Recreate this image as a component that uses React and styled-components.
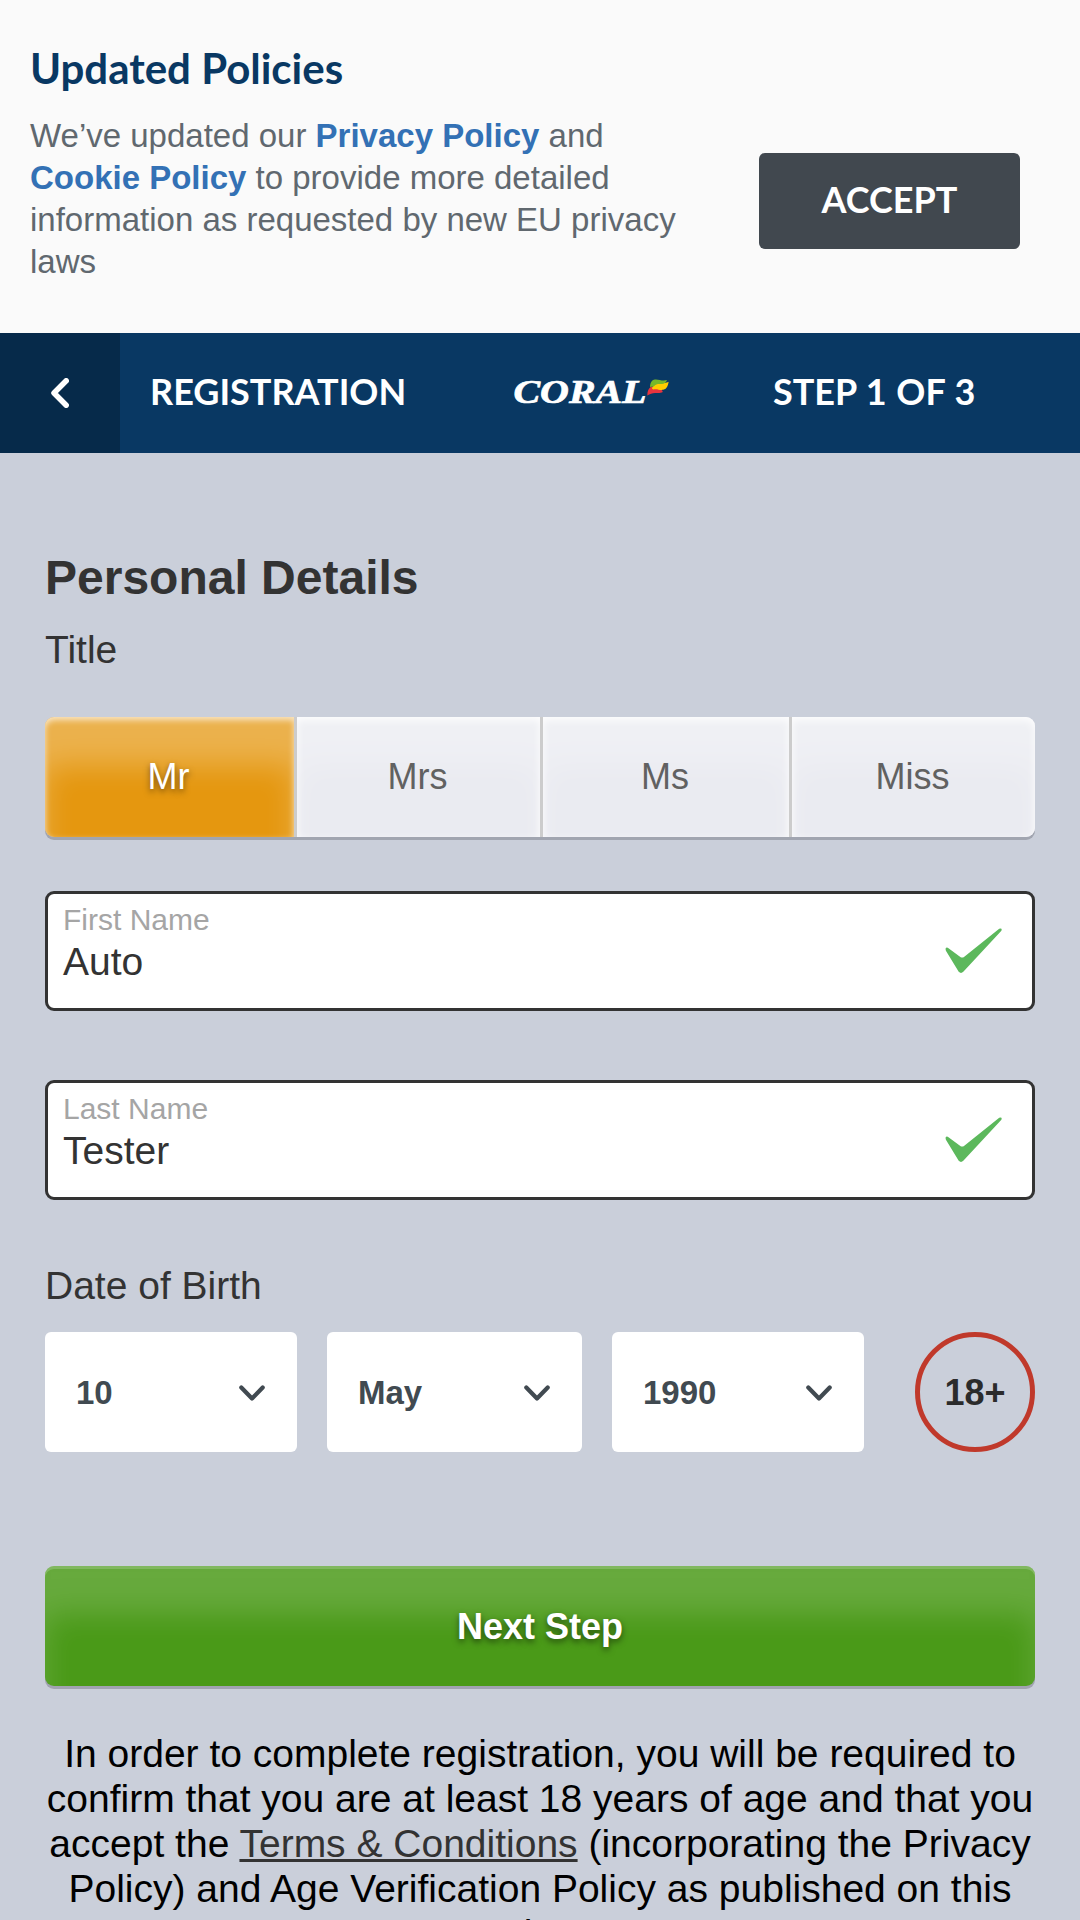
import React from 'react';
import styled, { createGlobalStyle, css } from 'styled-components';

const GlobalStyle = createGlobalStyle`
  *, *::before, *::after { box-sizing: border-box; }
  html, body { margin: 0; padding: 0; }
  body {
    background: #cacfda;
    color: #333;
    font-family: "Liberation Sans", Arial, Helvetica, sans-serif;
  }
  button, input { font: inherit; margin: 0; border: 0; padding: 0; }
  h1, h2, p { margin: 0; }
`;

const Page = styled.div`
  width: 1080px;
  height: 1920px;
  overflow: hidden;
  display: flex;
  flex-direction: column;
  background: #cacfda;
`;

const Banner = styled.section`
  flex: none;
  height: 333px;
  padding: 43px 60px 0 30px;
  display: flex;
  justify-content: space-between;
  background: #fafafa;
`;

const BannerCopy = styled.div`
  width: 675px;
`;

const BannerTitle = styled.h2`
  color: #093863;
  font: 700 42px/50px Lato, sans-serif;
`;

const BannerText = styled.p`
  margin-top: 22px;
  color: #60686f;
  font-size: 33px;
  line-height: 42px;
`;

const PolicyLink = styled.a`
  color: #3371b5;
  font-weight: 700;
`;

const AcceptButton = styled.button`
  width: 261px;
  height: 96px;
  margin-top: 110px;
  border-radius: 6px;
  background: #41484f;
  color: #fff;
  && {
    font: 700 36px/44px Lato, sans-serif;
    padding-bottom: 5px;
  }
`;

const NavBar = styled.header`
  flex: none;
  height: 120px;
  display: grid;
  grid-template-columns: 120px 393px 260px 1fr;
  align-items: center;
  background: #093863;
  color: #fff;
  font: 700 36px/44px Lato, sans-serif;
`;

const BackButton = styled.button`
  height: 120px;
  display: flex;
  align-items: center;
  justify-content: center;
  background: #062a4a;
`;

const NavTitle = styled.span`
  padding: 0 0 5px ${(p) => p.$inset || 0}px;
  word-spacing: 0.8px;
`;

const Form = styled.main`
  padding: 95px 45px 0;
  display: flex;
  flex-direction: column;
`;

const Heading = styled.h1`
  font-size: 48px;
  line-height: 60px;
`;

const Label = styled.div`
  margin-top: ${(p) => p.$top}px;
  font-size: 39px;
  line-height: 45px;
`;

const Segments = styled.div`
  margin-top: 45px;
  height: 120px;
  display: grid;
  grid-template-columns: 252px 246px 249px 243px;
  border-radius: 9px;
  box-shadow: 0 3px 0 #a1a5b0;
`;

const Segment = styled.button`
  border-right: 3px solid #ccc;
  background: #eaebf1;
  color: #616161;
  && {
    font-size: 36px;
    padding-right: 2px;
  }
  box-shadow: inset 0 3px 9px rgba(255, 255, 255, 0.9), inset 0 48px 30px rgba(255, 255, 255, 0.25);
  &:first-child { border-radius: 9px 0 0 9px; }
  &:last-child { border-right: 0; border-radius: 0 9px 9px 0; }
  ${(p) =>
    p.$active &&
    css`
      background: #e5970f;
      color: #fff;
      text-shadow: 0 3px 6px rgba(0, 0, 0, 0.5);
      box-shadow: inset 0 3px 6px rgba(255, 255, 255, 0.7), inset 0 48px 30px rgba(255, 255, 255, 0.26);
    `}
`;

const Field = styled.label`
  margin-top: ${(p) => p.$top}px;
  height: 120px;
  padding: 0 30px 0 15px;
  display: flex;
  align-items: center;
  justify-content: space-between;
  border: 3px solid #333;
  border-radius: 9px;
  background: #fff;
`;

const FieldBody = styled.span`
  height: 114px;
  padding-top: 9px;
  display: flex;
  flex: 1;
  flex-direction: column;
  gap: 3px;
`;

const FieldLabel = styled.span`
  color: #a5a5a5;
  font-size: 30px;
  line-height: 33px;
`;

const FieldValue = styled.span`
  font-size: 39px;
  line-height: 45px;
`;

const BirthRow = styled.div`
  margin-top: 24px;
  height: 120px;
  display: grid;
  grid-template-columns: 252px 255px 252px 120px;
  column-gap: 30px;
`;

const Select = styled.div`
  padding: 2px 32px 0 31px;
  display: flex;
  align-items: center;
  justify-content: space-between;
  border-radius: 6px;
  background: #fff;
  color: #414a51;
  font-size: 33px;
  font-weight: 700;
  line-height: 38px;
`;

const AgeBadge = styled.div`
  width: 120px;
  height: 120px;
  margin-left: 21px;
  padding-top: 2px;
  display: flex;
  align-items: center;
  justify-content: center;
  border: 5px solid #c0392b;
  border-radius: 50%;
  color: #2b2b2b;
  font-size: 36px;
  font-weight: 700;
`;

const SubmitButton = styled.button`
  margin-top: 114px;
  height: 120px;
  border-radius: 9px;
  background: #4a9a18;
  color: #fff;
  && {
    font-size: 36px;
    font-weight: 700;
    padding-top: 1px;
  }
  text-shadow: 0 3px 6px rgba(0, 0, 0, 0.5);
  box-shadow: 0 3px 0 #a1a3b1, inset 0 3px 0 rgba(255, 255, 255, 0.18),
    inset 0 48px 30px rgba(255, 255, 255, 0.16);
`;

const Terms = styled.p`
  margin-top: 45px;
  color: #000;
  font-size: 39px;
  line-height: 45px;
  text-align: center;
`;

const TermsLink = styled.a`
  color: #333;
  text-decoration: underline;
  text-decoration-thickness: 3px;
`;

const LogoSvg = styled.svg`
  overflow: visible;
`;

const BackArrow = () => (
  <svg width="18" height="30" viewBox="0 0 18 30" fill="none" stroke="#fff" strokeWidth="5.5" strokeLinecap="round" strokeLinejoin="round">
    <path d="M15.200 2.800 3 15l12.200 12.200" />
  </svg>
);

const Caret = () => (
  <svg width="26" height="17" viewBox="0 0 26 17" fill="none" stroke="#414a51" strokeWidth="4.200" strokeLinecap="round" strokeLinejoin="round">
    <path d="M2.300 2.500 13 13.500 23.700 2.500" />
  </svg>
);

const Tick = () => (
  <svg width="57" height="46" viewBox="0 0 57 46" fill="#5cb85c">
    <path d="M.5 20.700Q1.500 18.800 3.500 20.200L15.700 29.300Q17.500 30 19.300 28.700L54.200 .8Q57.500-.4 56.400 2.800L18.300 43.800Q16 46 13.700 43.800L.9 22.700Z" />
  </svg>
);

const Logo = () => (
  <LogoSvg width="160" height="30" viewBox="0 0 160 30">
    <text x="0.500" y="25" fill="#fff" stroke="#fff" strokeWidth="0.7" fontFamily="'Liberation Serif', serif" fontWeight="700" fontStyle="italic" fontSize="33" textLength="133" lengthAdjust="spacingAndGlyphs">
      CORAL
    </text>
    <path fill="#e8343e" d="M134.300 17.600C134.300 13.500 135.500 10 138.500 8.600L148 11.500c1 .6 1.600 1.500 1.800 2.500-1.800 1-3.700 1.200-6.300 1-3.700-.3-6.200.5-9.200 2.600z" />
    <path fill="#fc0" d="M139 10.800C139.800 7 142 4.800 146 5c3.500.3 6.500.3 9.600-1.200-.4 3.500-1.600 7.200-5.300 8-3.700.5-5.700-.9-8.300-.6-1.200.1-1.500.5-3-.4z" />
    <path fill="#76b82a" d="M137 9C137.200 5 138.500 1.900 142 1.500c4-.4 7 2 12 .6-1 2.700-2.800 3.900-5.200 3.900-3.300-.2-6-.3-8 2.500-1.300-.2-2.600-.2-3.800.5z" />
  </LogoSvg>
);

const titles = ['Mr', 'Mrs', 'Ms', 'Miss'];
const names = [
  { label: 'First Name', value: 'Auto', top: 54 },
  { label: 'Last Name', value: 'Tester', top: 69 },
];
const birth = ['10', 'May', '1990'];

export default function App() {
  return (
    <>
      <GlobalStyle />
      <Page>
        <Banner>
          <BannerCopy>
            <BannerTitle>Updated Policies</BannerTitle>
            <BannerText>
              We’ve updated our <PolicyLink>Privacy Policy</PolicyLink> and{' '}
              <PolicyLink>Cookie Policy</PolicyLink> to provide more detailed information as requested by new EU
              privacy laws
            </BannerText>
          </BannerCopy>
          <AcceptButton>ACCEPT</AcceptButton>
        </Banner>
        <NavBar>
          <BackButton aria-label="Back">
            <BackArrow />
          </BackButton>
          <NavTitle $inset={30}>REGISTRATION</NavTitle>
          <Logo />
          <NavTitle>STEP 1 OF 3</NavTitle>
        </NavBar>
        <Form>
          <Heading>Personal Details</Heading>
          <Label $top={19}>Title</Label>
          <Segments>
            {titles.map((t, i) => (
              <Segment key={t} $active={i === 0}>
                {t}
              </Segment>
            ))}
          </Segments>
          {names.map((f) => (
            <Field key={f.label} $top={f.top}>
              <FieldBody>
                <FieldLabel>{f.label}</FieldLabel>
                <FieldValue>{f.value}</FieldValue>
              </FieldBody>
              <Tick />
            </Field>
          ))}
          <Label $top={63}>Date of Birth</Label>
          <BirthRow>
            {birth.map((v) => (
              <Select key={v}>
                {v}
                <Caret />
              </Select>
            ))}
            <AgeBadge>18+</AgeBadge>
          </BirthRow>
          <SubmitButton>Next Step</SubmitButton>
          <Terms>
            In order to complete registration, you will be required to confirm that you are at least 18 years of age
            and that you accept the <TermsLink>Terms &amp; Conditions</TermsLink> (incorporating the Privacy Policy) and
            Age Verification Policy as published on this site.
          </Terms>
        </Form>
      </Page>
    </>
  );
}
